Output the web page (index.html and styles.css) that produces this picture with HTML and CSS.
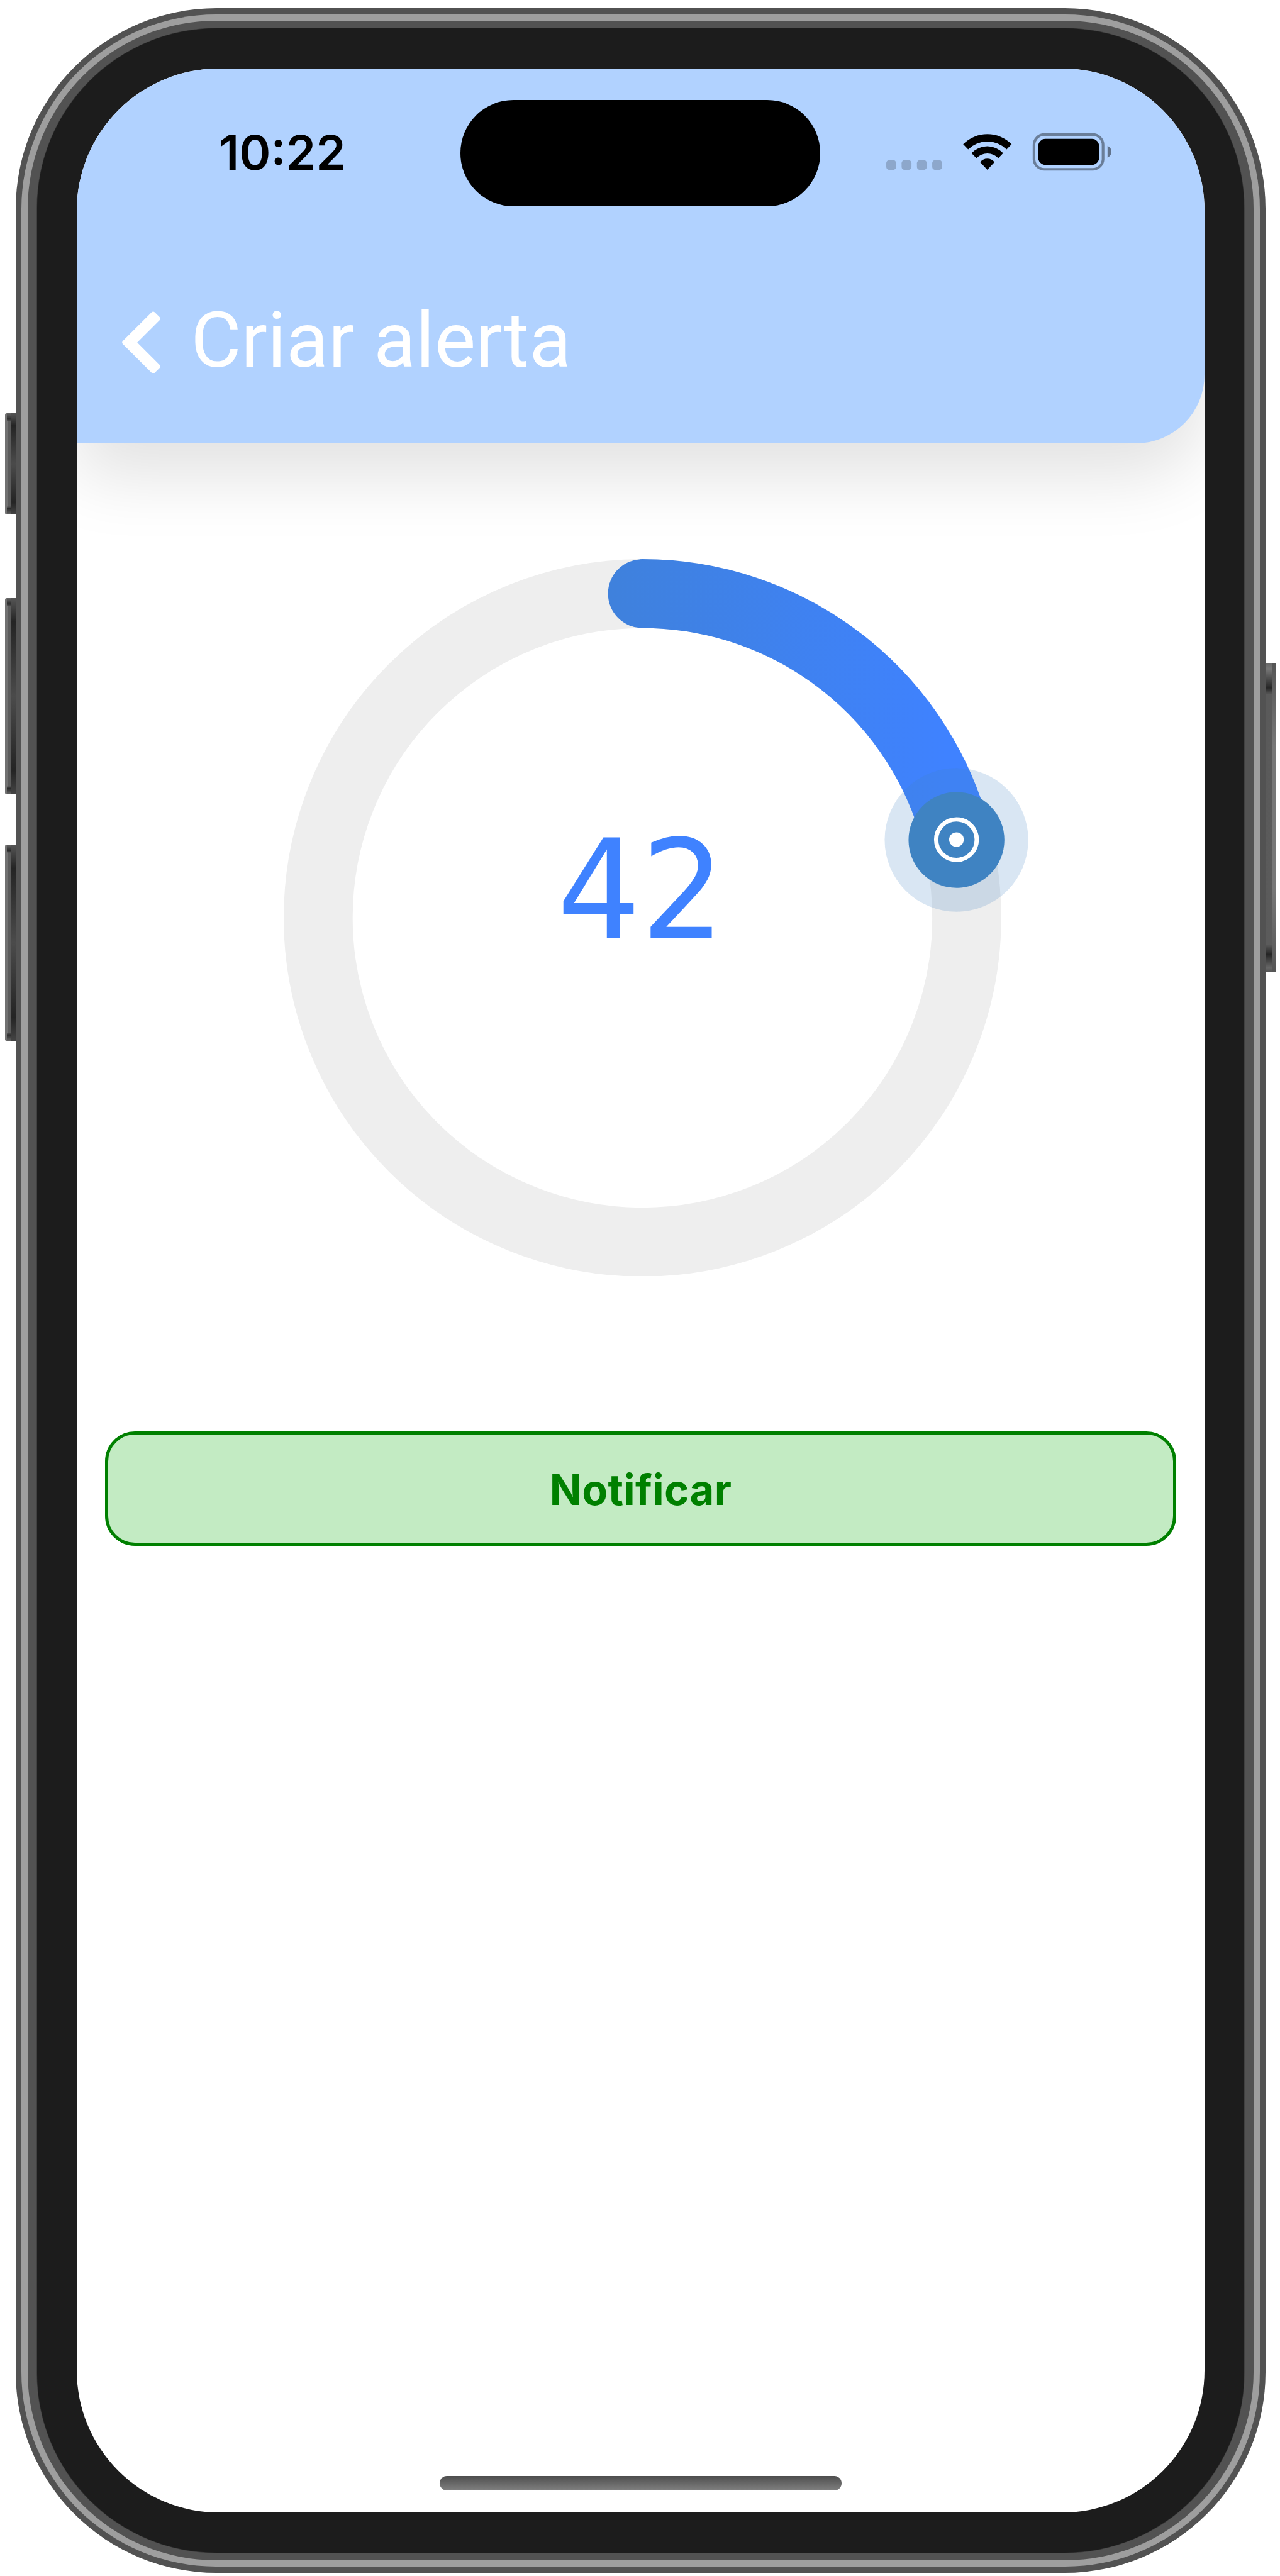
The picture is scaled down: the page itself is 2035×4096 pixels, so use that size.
FILE: index.html
```html
<!DOCTYPE html>
<html lang="pt-BR">
<head>
<meta charset="utf-8">
<title>Criar alerta</title>
<link rel="stylesheet" href="styles.css">
</head>
<body>
<div class="device">
  <span class="side-key left mute"></span>
  <span class="side-key left volume-up"></span>
  <span class="side-key left volume-down"></span>
  <span class="side-key right power"></span>
  <div class="rim"><div class="band"><div class="inner-rim"><div class="bezel">
    <main class="screen">
      <header class="header">
        <div class="status">
          <span class="time">10:22</span>
          <span class="island"></span>
          <svg class="status-icons" viewBox="1484 220 378 68">
            <g opacity=".2">
              <rect x="1484" y="268" width="16.5" height="16.5" rx="5"/>
              <rect x="1509.7" y="268" width="16.5" height="16.5" rx="5"/>
              <rect x="1535.4" y="268" width="16.5" height="16.5" rx="5"/>
              <rect x="1561" y="268" width="16.5" height="16.5" rx="5"/>
            </g>
            <path d="M1612.8 241.4A57 57 0 0 1 1694 241.4L1685.6 250A46 46 0 0 0 1621.2 250Z"/>
            <path d="M1626.8 256.4A36 36 0 0 1 1679.8 256.4L1671.8 264.8A25.5 25.5 0 0 0 1635 264.8Z"/>
            <path d="M1641.2 271.4A15.5 15.5 0 0 1 1665.4 271.4L1653.3 284.4Z"/>
            <rect x="1731.5" y="225.2" width="115.7" height="58.3" rx="17.5" fill="none" stroke="#000" stroke-width="4.4" opacity=".4"/>
            <rect x="1738.6" y="232.5" width="102" height="43.5" rx="12"/>
            <path d="M1854.7 244Q1861.3 247.5 1861.3 254T1854.7 264Z" opacity=".45"/>
          </svg>
        </div>
        <div class="title-row">
          <svg class="back" viewBox="204 521 64 104"><path d="M208.4 573.3L256.2 525.7L264 533.3L223.9 573.3L264 613.3L256.2 620.9Z"/></svg>
          <h1>Criar alerta</h1>
        </div>
      </header>
      <section class="dial">
        <svg class="ring" viewBox="0 0 1340 1202">
          <defs>
            <linearGradient id="arc" gradientUnits="userSpaceOnUse" x1="543" y1="0" x2="1110" y2="0">
              <stop offset="0" stop-color="#3f81dc"/><stop offset="1" stop-color="#3f82ff"/>
            </linearGradient>
          </defs>
          <circle cx="601" cy="601" r="543.2" fill="none" stroke="#eee" stroke-width="115.5"/>
          <path d="M601 57.8A543.2 543.2 0 0 1 1128.3 470.5" fill="none" stroke="url(#arc)" stroke-width="115.5" stroke-linecap="round"/>
          <circle cx="1127" cy="470.5" r="120.3" fill="#3f83c2" opacity=".2"/>
          <circle cx="1127" cy="470.5" r="80.3" fill="#3f83c2"/>
          <circle cx="1127" cy="470" r="34" fill="none" stroke="#fff" stroke-width="7.2"/>
          <circle cx="1127" cy="470" r="12.3" fill="#fff"/>
        </svg>
        <span class="value">42</span>
      </section>
      <button class="notify">Notificar</button>
      <span class="home"></span>
    </main>
  </div></div></div></div>
</div>
</body>
</html>
```
FILE: styles.css
```css
/* 1rem is one hundred design pixels */
html { font-size: 94.91px; background: #fff; }
* { box-sizing: border-box; }
body { margin: 0; height: 43.15rem; overflow: hidden; }

.device { position: relative; width: 20.943rem; height: 42.96rem; margin: .14rem 0 0 .26rem; }
.rim, .band, .inner-rim, .bezel { height: 100%; }
.rim { position: relative; padding: .1rem; border-radius: 3.36rem; background: #525252; }
.band { padding: .105rem; border-radius: 3.26rem; background: #9e9e9e; }
.inner-rim { padding: .127rem .155rem; border-radius: 3.155rem; background: #525252; }
.bezel { padding: .68rem .663rem; border-radius: 3.01rem; background: #1c1c1c; box-shadow: 0 0 0 .007rem #3a3a3a; }
.screen { display: flex; flex-direction: column; height: 100%; overflow: hidden; border-radius: 2.38rem; background: #fff; }

.side-key { position: absolute; width: .19rem; }
.side-key.left { left: -.18rem; border-radius: .03rem 0 0 .03rem;
  background:
    linear-gradient(#666, #2a2a2a .1rem, transparent .14rem, transparent calc(100% - .14rem), #2a2a2a calc(100% - .1rem), #666) .04rem 0 / .07rem 100% no-repeat,
    linear-gradient(90deg, #717171 .04rem, #5b5b5b .04rem .11rem, transparent .11rem),
    linear-gradient(#555, #242424 12%, #4b4b4b 50%, #242424 88%, #444); }
.mute { top: 6.785rem; height: 1.69rem; }
.volume-up { top: 9.88rem; height: 3.29rem; }
.volume-down { top: 14.01rem; height: 3.29rem; }
.side-key.right { right: -.18rem; border-radius: 0 .04rem .04rem 0;
  background:
    linear-gradient(#666, #777 .1rem, #252525 .42rem, #5a5a5a .53rem, #5b5b5b calc(100% - .47rem), #252525 calc(100% - .3rem), #666 calc(100% - .08rem), #555) 0 0 / .13rem 100% no-repeat,
    linear-gradient(#555, #777 1.4rem, #777 calc(100% - 1.4rem), #555); }
.power { top: 10.97rem; height: 5.18rem; }

.header { flex: none; height: 6.275rem; background: #b1d2ff; border-radius: 0 0 1.15rem 0; box-shadow: 0 .53rem 1.15rem rgba(0, 0, 0, .118); }
.status { display: grid; grid-template-columns: 6.435rem 6.025rem 1fr; height: 3.2rem; padding-top: .527rem; }
.time { padding-left: 2.385rem; font: 600 .802rem/1.77rem Inter, sans-serif; color: #000; }
.island { height: 1.773rem; border-radius: .887rem; background: #000; }
.status-icons { display: block; width: 3.78rem; height: .68rem; margin: .523rem 0 0 1.1rem; }
.title-row { display: flex; align-items: center; gap: .512rem; padding-left: .76rem; height: 2.76rem; }
.back { width: .64rem; height: 1.04rem; fill: #fff; stroke: #fff; stroke-width: 8; stroke-linejoin: round; }
h1 { margin: 0; padding-bottom: .05rem; font: 400 1.297rem/1.6rem Roboto, sans-serif; color: #fff; }

.dial { display: grid; flex: none; margin: 1.937rem 0 0 3.465rem; width: 13.4rem; height: 12.02rem; }
.dial > * { grid-area: 1 / 1; }
.ring { width: 13.4rem; height: 12.02rem; }
.value { width: 11.97rem; padding-top: 4.21rem; text-align: center; font: 2.31rem/2.7rem "DejaVu Sans", sans-serif; color: #3f82ff; transform: scaleX(.957); }
.notify { flex: none; margin: 2.6rem .48rem 0; height: 1.92rem; padding: .04rem 0 0; border: .053rem solid #008000; border-radius: .5rem; background: #c3ebc3; color: #008000; font: 700 .705rem/1 Inter, sans-serif; letter-spacing: .004rem; }
.home { width: 6.73rem; height: .242rem; margin: auto auto .365rem; border-radius: .121rem; background: linear-gradient(#4e4e4e, #808080); }
```
